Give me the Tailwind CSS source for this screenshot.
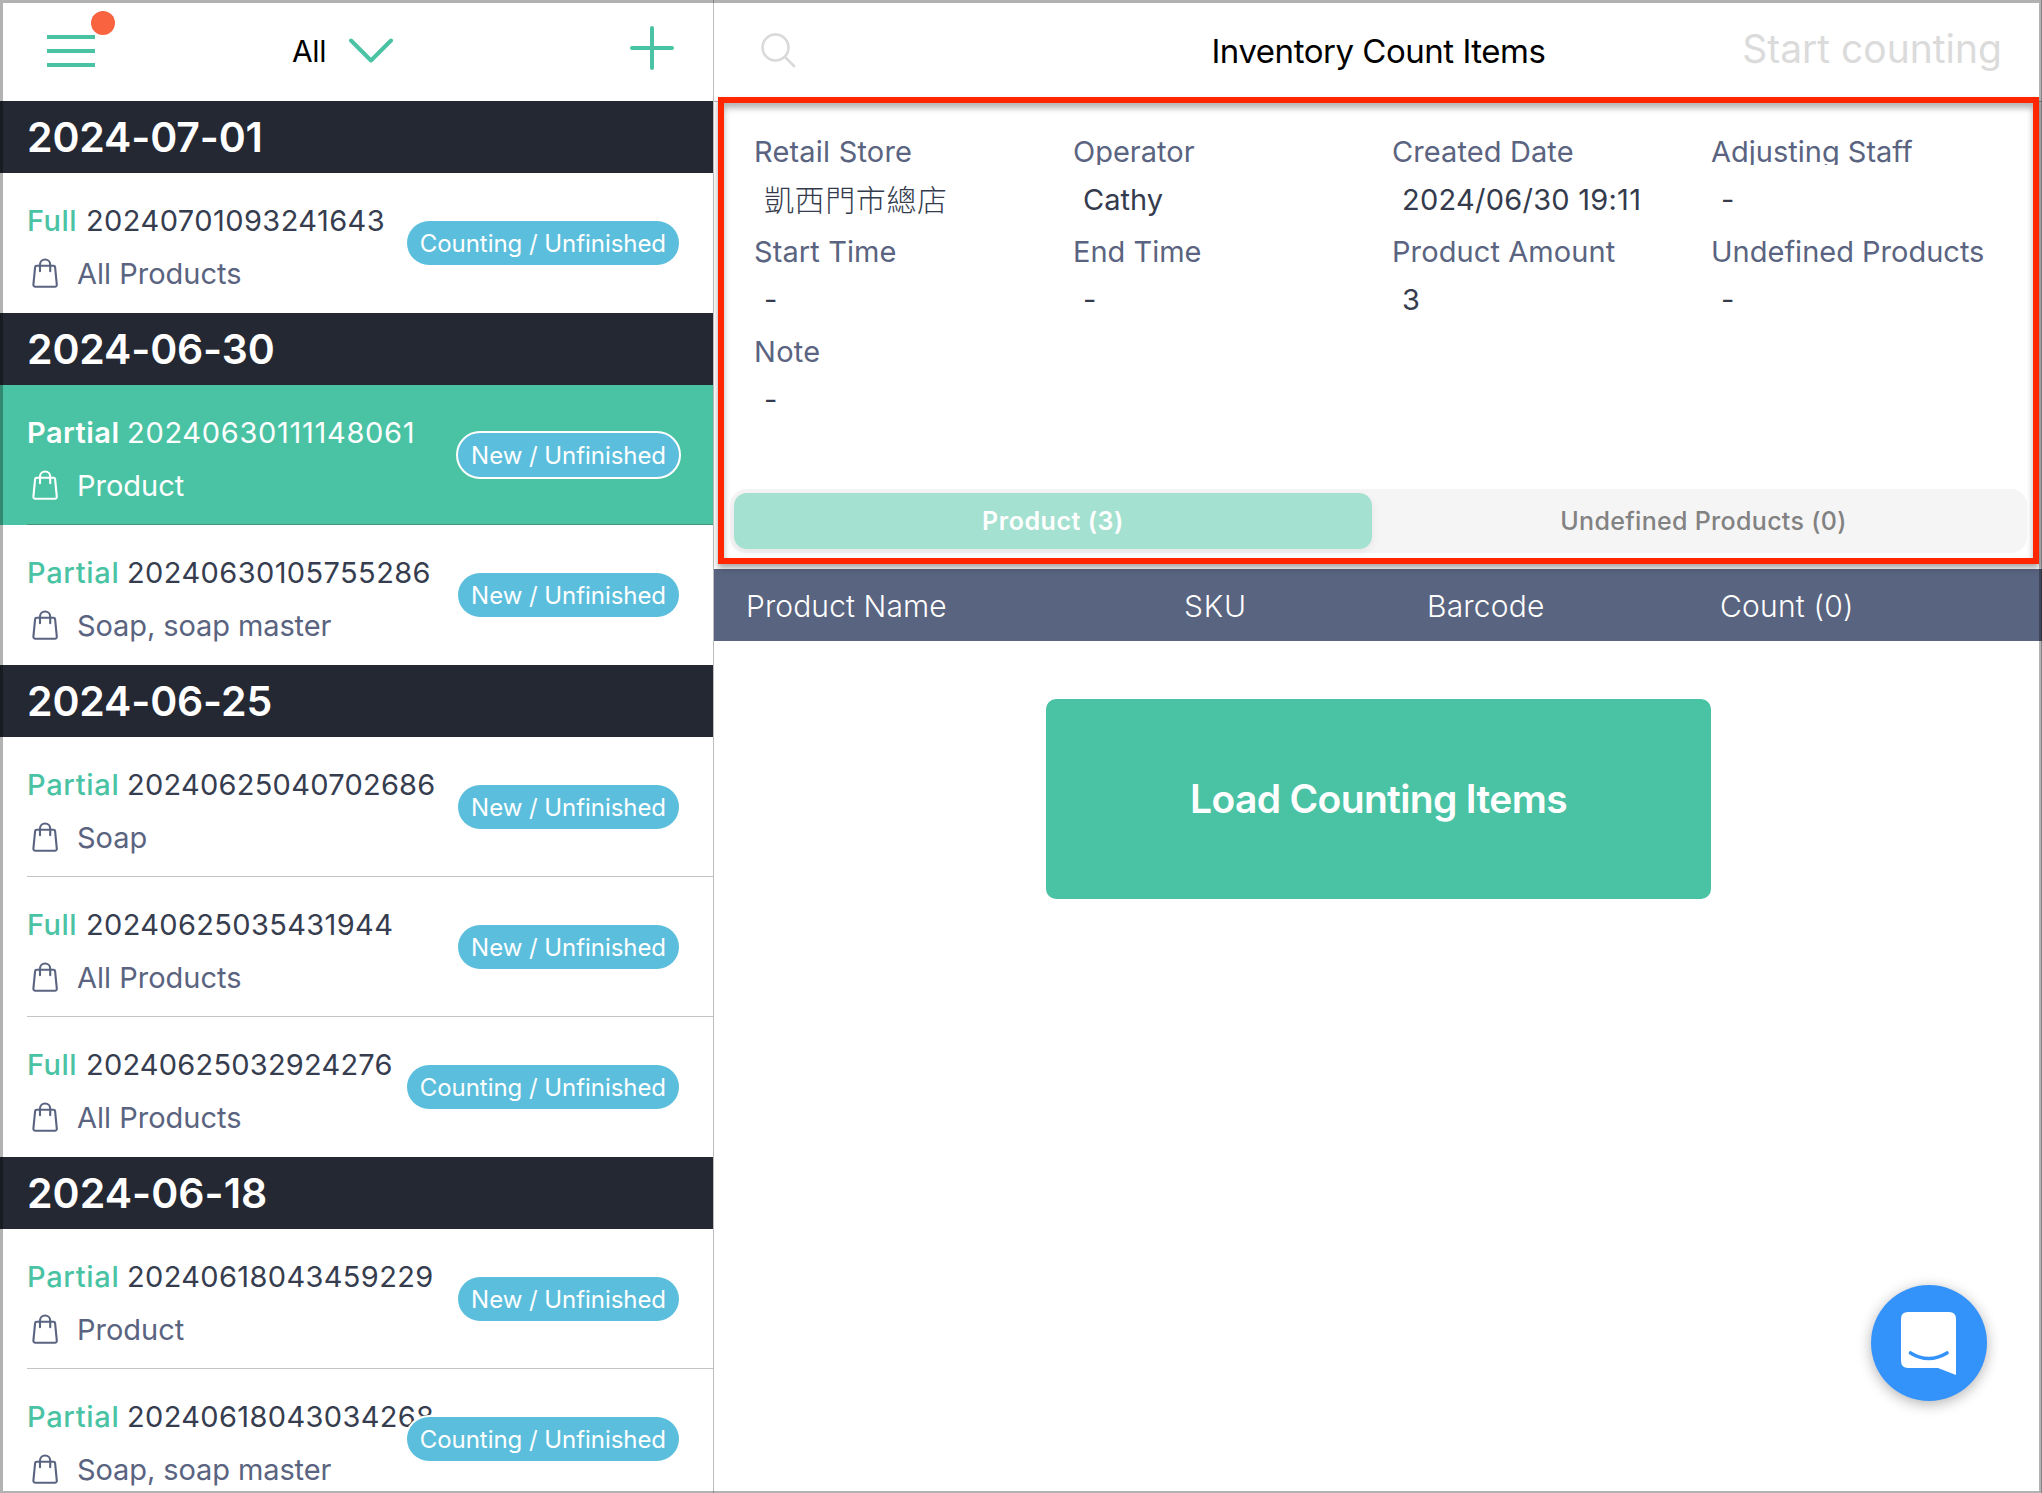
<!DOCTYPE html>
<html lang="en">
<head>
    <meta charset="UTF-8">
    <meta name="viewport" content="width=device-width, initial-scale=1.0">
    <title>Inventory Count Items</title>
    <script src="https://cdn.jsdelivr.net/npm/@tailwindcss/browser@4"></script>
</head>
<body class="bg-white font-['Inter','Noto_Sans_CJK_TC',sans-serif]">
    <svg class="hidden">
        <symbol id="bag" viewBox="0 0 26 32">
            <path d="M4.6 7.8h17c.8 0 1.4.5 1.5 1.3l1.7 17.6c.1 1.2-.7 2-1.8 2H3.2c-1.1 0-1.9-.8-1.8-2L3.1 9.1c.1-.8.7-1.3 1.5-1.3z" fill="none" stroke="currentColor" stroke-width="2.1"/>
            <path d="M8 13.2V6.6a5.1 5.1 0 0 1 10.2 0v6.6" fill="none" stroke="currentColor" stroke-width="2.1" stroke-linecap="round"/>
        </symbol>
    </svg>

    <div class="relative flex w-[2042px] h-[1493px] overflow-hidden">
        <!-- Count list -->
        <aside class="w-[714px] shrink-0 border-r border-[#bdbdbd]">
            <div class="flex items-center h-[101px] pl-[47px] pr-[39px]">
                <button class="relative flex flex-col gap-[10px] w-[48px]">
                    <span class="h-[4px] bg-[#4ac3a4]"></span>
                    <span class="h-[4px] bg-[#4ac3a4]"></span>
                    <span class="h-[4px] bg-[#4ac3a4]"></span>
                    <span class="absolute left-[44px] -top-[24px] size-[24px] rounded-full bg-[#f96340]"></span>
                </button>
                <button class="flex items-center gap-[22px] ml-[197px]">
                    <span class="text-[30px] leading-[40px] tracking-[-0.4px]">All</span>
                    <svg width="46" height="26" viewBox="0 0 46 26" fill="none" stroke="#4ac3a4" stroke-width="4" stroke-linecap="round" stroke-linejoin="round"><path d="M3 2.500L23 22.500L43 2.500"/></svg>
                </button>
                <svg class="ml-auto mb-[5px]" width="44" height="44" viewBox="0 0 44 44" stroke="#4ac3a4" stroke-width="4" stroke-linecap="round"><path d="M2 22h40M22 2v40"/></svg>
            </div>

            <h2 class="h-[72px] pl-[27px] bg-[#242833] text-white text-[41px] font-semibold leading-[72px] tracking-[-0.15px]">2024-07-01</h2>
            <div class="relative h-[140px] pl-[27px] pt-[28px] text-[29px] leading-[40px] text-[#363d4f]">
                <p class="flex"><b class="w-[59px] font-medium text-[#4ac3a4] tracking-[0.5px]">Full</b><span class="tracking-[0.43px]">20240701093241643</span></p>
                <p class="flex items-center mt-[13px] text-[#5a6480]"><svg class="w-[26px] h-[32px] ml-[5px] mr-[19px]"><use href="#bag"/></svg>All Products</p>
                <span class="absolute right-[34px] top-[48px] h-[44px] px-[13px] rounded-full bg-[#5bbedc] text-white text-[24px] leading-[45px] tracking-[-0.05px]">Counting / Unfinished</span>
            </div>

            <h2 class="h-[72px] pl-[27px] bg-[#242833] text-white text-[41px] font-semibold leading-[72px] tracking-[-0.15px]">2024-06-30</h2>
            <div class="relative h-[140px] pl-[27px] bg-[#4ac3a4] text-[29px] leading-[40px] text-white">
                <div class="h-[140px] pt-[28px] border-b border-[#46927f]">
                    <p class="flex"><b class="w-[100px] font-semibold tracking-[0.48px]">Partial</b><span class="tracking-[0.7px]">20240630111148061</span></p>
                    <p class="flex items-center mt-[13px]"><svg class="w-[26px] h-[32px] ml-[5px] mr-[19px]"><use href="#bag"/></svg>Product</p>
                </div>
                <span class="absolute right-[32px] top-[46px] h-[48px] px-[13px] rounded-full border-2 border-white bg-[#5bbedc] text-[24px] leading-[45px] tracking-[-0.05px]">New / Unfinished</span>
            </div>
            <div class="relative h-[140px] pl-[27px] pt-[28px] text-[29px] leading-[40px] text-[#363d4f]">
                <p class="flex"><b class="w-[100px] font-medium text-[#4ac3a4] tracking-[0.7px]">Partial</b><span class="tracking-[0.4px]">20240630105755286</span></p>
                <p class="flex items-center mt-[13px] text-[#5a6480] tracking-[-0.1px]"><svg class="w-[26px] h-[32px] ml-[5px] mr-[19px]"><use href="#bag"/></svg>Soap, soap master</p>
                <span class="absolute right-[34px] top-[48px] h-[44px] px-[13px] rounded-full bg-[#5bbedc] text-white text-[24px] leading-[45px] tracking-[-0.05px]">New / Unfinished</span>
            </div>

            <h2 class="h-[72px] pl-[27px] bg-[#242833] text-white text-[41px] font-semibold leading-[72px] tracking-[-0.15px]">2024-06-25</h2>
            <div class="relative h-[140px] pl-[27px] text-[29px] leading-[40px] text-[#363d4f]">
                <div class="h-[140px] pt-[28px] border-b border-[#c4c4c6]">
                    <p class="flex"><b class="w-[100px] font-medium text-[#4ac3a4] tracking-[0.7px]">Partial</b><span class="tracking-[0.26px]">20240625040702686</span></p>
                    <p class="flex items-center mt-[13px] text-[#5a6480]"><svg class="w-[26px] h-[32px] ml-[5px] mr-[19px]"><use href="#bag"/></svg>Soap</p>
                </div>
                <span class="absolute right-[34px] top-[48px] h-[44px] px-[13px] rounded-full bg-[#5bbedc] text-white text-[24px] leading-[45px] tracking-[-0.05px]">New / Unfinished</span>
            </div>
            <div class="relative h-[140px] pl-[27px] text-[29px] leading-[40px] text-[#363d4f]">
                <div class="h-[140px] pt-[28px] border-b border-[#c4c4c6]">
                    <p class="flex"><b class="w-[59px] font-medium text-[#4ac3a4] tracking-[0.5px]">Full</b><span class="tracking-[0.35px]">20240625035431944</span></p>
                    <p class="flex items-center mt-[13px] text-[#5a6480]"><svg class="w-[26px] h-[32px] ml-[5px] mr-[19px]"><use href="#bag"/></svg>All Products</p>
                </div>
                <span class="absolute right-[34px] top-[48px] h-[44px] px-[13px] rounded-full bg-[#5bbedc] text-white text-[24px] leading-[45px] tracking-[-0.05px]">New / Unfinished</span>
            </div>
            <div class="relative h-[140px] pl-[27px] pt-[28px] text-[29px] leading-[40px] text-[#363d4f]">
                <p class="flex"><b class="w-[59px] font-medium text-[#4ac3a4] tracking-[0.5px]">Full</b><span class="tracking-[0.22px]">20240625032924276</span></p>
                <p class="flex items-center mt-[13px] text-[#5a6480]"><svg class="w-[26px] h-[32px] ml-[5px] mr-[19px]"><use href="#bag"/></svg>All Products</p>
                <span class="absolute right-[34px] top-[48px] h-[44px] px-[13px] rounded-full bg-[#5bbedc] text-white text-[24px] leading-[45px] tracking-[-0.05px]">Counting / Unfinished</span>
            </div>

            <h2 class="h-[72px] pl-[27px] bg-[#242833] text-white text-[41px] font-semibold leading-[72px] tracking-[0.05px]">2024-06-18</h2>
            <div class="relative h-[140px] pl-[27px] text-[29px] leading-[40px] text-[#363d4f]">
                <div class="h-[140px] pt-[28px] border-b border-[#c4c4c6]">
                    <p class="flex"><b class="w-[100px] font-medium text-[#4ac3a4] tracking-[0.7px]">Partial</b><span class="tracking-[0.35px]">20240618043459229</span></p>
                    <p class="flex items-center mt-[13px] text-[#5a6480]"><svg class="w-[26px] h-[32px] ml-[5px] mr-[19px]"><use href="#bag"/></svg>Product</p>
                </div>
                <span class="absolute right-[34px] top-[48px] h-[44px] px-[13px] rounded-full bg-[#5bbedc] text-white text-[24px] leading-[45px] tracking-[-0.05px]">New / Unfinished</span>
            </div>
            <div class="relative h-[140px] pl-[27px] pt-[28px] text-[29px] leading-[40px] text-[#363d4f]">
                <p class="flex"><b class="w-[100px] font-medium text-[#4ac3a4] tracking-[0.7px]">Partial</b><span class="tracking-[0.35px]">20240618043034268</span></p>
                <p class="flex items-center mt-[13px] text-[#5a6480] tracking-[-0.1px]"><svg class="w-[26px] h-[32px] ml-[5px] mr-[19px]"><use href="#bag"/></svg>Soap, soap master</p>
                <span class="absolute right-[34px] top-[48px] h-[44px] px-[13px] rounded-full bg-[#5bbedc] text-white text-[24px] leading-[45px] tracking-[-0.05px] shadow-[0_0_0_2px_#fff]">Counting / Unfinished</span>
            </div>
        </aside>

        <!-- Count detail -->
        <main class="flex-1">
            <div class="grid grid-cols-[1fr_auto_1fr] items-center h-[102px] pl-[46px] pr-[40px] border-b border-[#b5b5b5]">
                <svg width="37" height="37" viewBox="0 0 37 37" fill="none" stroke="#d9d9d9" stroke-width="2.600" stroke-linecap="round"><circle cx="15.500" cy="15.500" r="13"/><path d="M25 25L34 34"/></svg>
                <h1 class="mr-[5px] text-[33px] leading-[40px] tracking-[-0.47px]">Inventory Count Items</h1>
                <button class="justify-self-end text-[39px] leading-[50px] text-[#dbdbdb] mb-[4px]">Start counting</button>
            </div>

            <section class="h-[467px]">
                <dl class="grid grid-cols-4 w-[1276px] ml-[40px] pt-[35px] h-[387px] auto-rows-[100px] content-start text-[29px] text-[#343b4d]">
                    <div><dt class="leading-[30px] text-[#5a6480] tracking-[0.2px]">Retail Store</dt><dd class="mt-[13px] pl-[10px] leading-[40px] whitespace-nowrap text-[30px] font-light tracking-[0.6px]">凱西門市總店</dd></div>
                    <div><dt class="h-[28px] overflow-hidden leading-[30px] text-[#5a6480]">Operator</dt><dd class="mt-[15px] pl-[10px] leading-[40px]">Cathy</dd></div>
                    <div><dt class="leading-[30px] text-[#5a6480] tracking-[0.1px]">Created Date</dt><dd class="mt-[13px] pl-[10px] leading-[40px] tracking-[0.25px]">2024/06/30 19:11</dd></div>
                    <div><dt class="h-[28px] overflow-hidden leading-[30px] text-[#5a6480]">Adjusting Staff</dt><dd class="mt-[15px] pl-[10px] leading-[40px]">-</dd></div>
                    <div><dt class="leading-[30px] text-[#5a6480] tracking-[0.1px]">Start Time</dt><dd class="mt-[13px] pl-[10px] leading-[40px]">-</dd></div>
                    <div><dt class="leading-[30px] text-[#5a6480]">End Time</dt><dd class="mt-[13px] pl-[10px] leading-[40px]">-</dd></div>
                    <div><dt class="leading-[30px] text-[#5a6480] tracking-[0.1px]">Product Amount</dt><dd class="mt-[13px] pl-[10px] leading-[40px]">3</dd></div>
                    <div><dt class="leading-[30px] text-[#5a6480] whitespace-nowrap">Undefined Products</dt><dd class="mt-[13px] pl-[10px] leading-[40px]">-</dd></div>
                    <div><dt class="leading-[30px] text-[#5a6480] tracking-[0.3px]">Note</dt><dd class="mt-[13px] pl-[10px] leading-[40px]">-</dd></div>
                </dl>
                <div class="flex h-[64px] ml-[16px] mr-[15px] p-[4px] rounded-[16px] bg-[#f5f5f5] text-[25px] leading-[56px] text-center">
                    <button class="w-[638px] rounded-[13px] bg-[#a4e1d0] text-white font-semibold tracking-[0.54px] shadow-[0_3px_8px_rgba(0,0,0,0.07)]">Product (3)</button>
                    <button class="flex-1 text-[#828282] font-medium tracking-[0.31px] pl-[12px]">Undefined Products (0)</button>
                </div>
            </section>

            <div class="flex h-[72px] pl-[32px] bg-[#596480] text-white text-[30px] leading-[74px] font-light">
                <span class="w-[438px] tracking-[0.1px]">Product Name</span>
                <span class="w-[243px] tracking-[0.8px]">SKU</span>
                <span class="w-[293px] tracking-[0.2px]">Barcode</span>
                <span class="tracking-[0.2px]">Count (0)</span>
            </div>

            <button class="block w-[665px] h-[200px] mt-[58px] ml-[332px] rounded-[10px] bg-[#4ac3a4] text-white text-[39px] leading-[200px] font-semibold tracking-[-0.66px]">Load Counting Items</button>
        </main>

        <!-- Highlighted area -->
        <div class="absolute left-[718px] top-[97px] w-[1321px] h-[467px] border-6 border-[#ff2600] shadow-[0_4px_6px_rgba(0,0,0,0.35)] pointer-events-none"></div>
        <div class="absolute left-[724px] top-[103px] w-[1309px] h-[455px] shadow-[inset_0_5px_6px_rgba(0,0,0,0.3)] pointer-events-none"></div>

        <!-- Chat launcher -->
        <button class="absolute left-[1871px] top-[1285px] size-[116px] rounded-full bg-[#3492fb] shadow-[0_3px_14px_rgba(0,0,0,0.3)]">
            <svg width="116" height="116" viewBox="0 0 116 116">
                <path d="M37 27h41q7 0 7 7v56L67 83H37q-7 0-7-7V34q0-7 7-7z" fill="#fff"/>
                <path d="M39.500 68Q57.500 79 76 68" fill="none" stroke="#3492fb" stroke-width="3.600" stroke-linecap="round"/>
            </svg>
        </button>

        <!-- Window edge -->
        <div class="absolute inset-0 border-3 border-b-2 border-black/30 pointer-events-none"></div>
        <div class="absolute right-0 top-0 bottom-0 w-px bg-black/25 pointer-events-none"></div>
    </div>
</body>
</html>
